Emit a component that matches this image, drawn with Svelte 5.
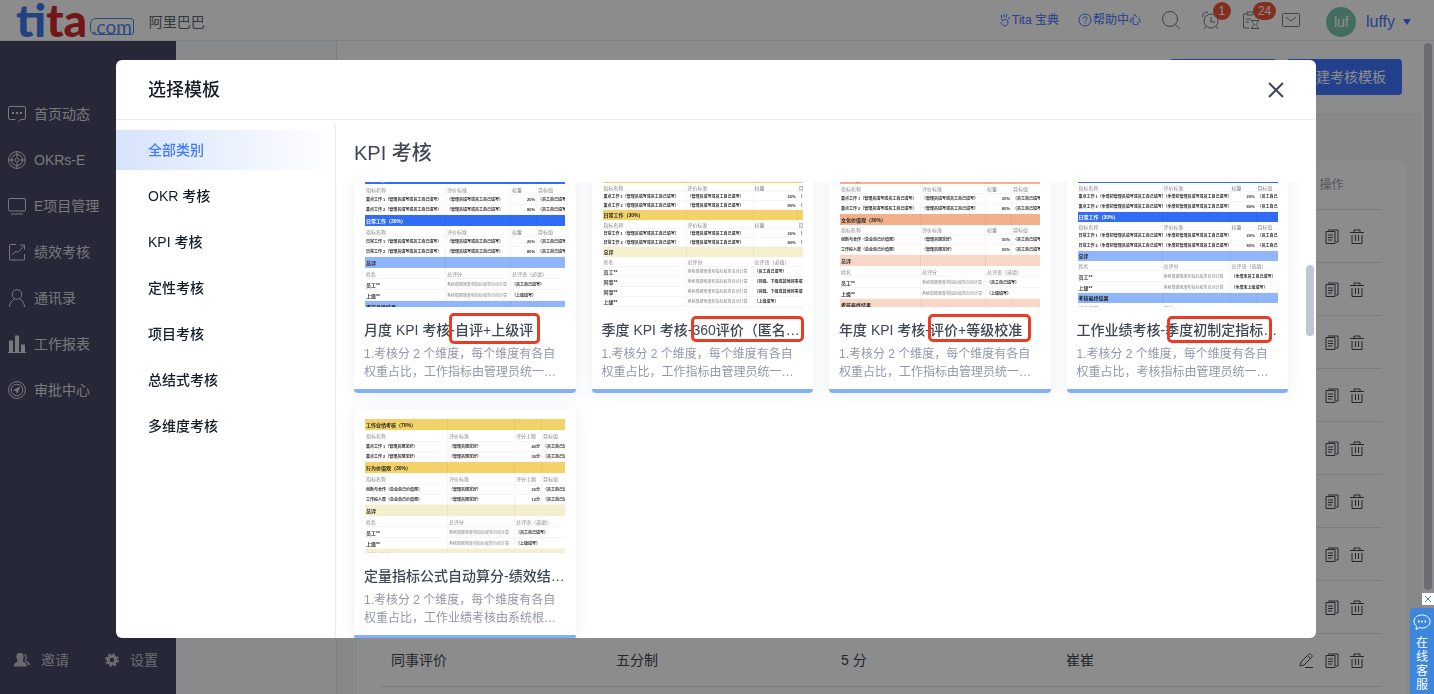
<script>
    let navItems = [
        { label: '首页动态', icon: 'chat' },
        { label: 'OKRs-E', icon: 'target' },
        { label: 'E项目管理', icon: 'screen' },
        { label: '绩效考核', icon: 'chart' },
        { label: '通讯录', icon: 'user' },
        { label: '工作报表', icon: 'bars' },
        { label: '审批中心', icon: 'stamp' }
    ];

    let categories = ['全部类别', 'OKR 考核', 'KPI 考核', '定性考核', '项目考核', '总结式考核', '多维度考核'];
    let active = $state('全部类别');

    const byBoth = '（管理员填写或员工自己填写）';
    const byQuarter = '（季度初管理员填写或员工自己填写）';
    const fixed = '（管理员规定好）';
    const own = '（员工自己填写）';

    function group(title, tone, rows, limit = '权重') {
        return { title, tone, head: ['指标名称', '评价标准', limit, '目标值'], rows };
    }

    function summary(tone, comment, rows) {
        return { title: '总评', tone, wide: true, head: ['姓名', '总评分', comment], rows: rows.map(([who, note]) => [who, '系统根据维度和指标权重自动计算', note]) };
    }

    // cols: widths of the preview columns, h: heights of title / head / body rows
    let templates = [
        {
            name: '月度 KPI 考核-自评+上级评',
            desc: '1.考核分 2 个维度，每个维度有各自权重占比，工作指标由管理员统一…',
            cols: [81, 65, 26, 68], h: [11, 11, 10], sh: [11, 11],
            mark: [95, 150, 91, 31],
            groups: [
                group('工作业绩（70%）', 'blue', [['重点工作 1' + byBoth, byBoth, '20%', own], ['重点工作 2' + byBoth, byBoth, '80%', own]]),
                group('日常工作（30%）', 'blue', [['日常工作 1' + byBoth, byBoth, '20%', own], ['日常工作 2' + byBoth, byBoth, '80%', own]]),
                summary('sky', '总评语（必填）', [['员工**', own], ['上级**', '（上级填写）']]),
                { title: '考核最终结果', tone: 'sky', head: [], rows: [] }
            ]
        },
        {
            name: '季度 KPI 考核-360评价（匿名…',
            desc: '1.考核分 2 个维度，每个维度有各自权重占比，工作指标由管理员统一…',
            cols: [84, 67, 44, 45], h: [10, 9, 9], sh: [10, 10],
            mark: [99, 153, 113, 26],
            groups: [
                group('工作业绩（70%）', 'gold', [['重点工作 1' + byBoth, byBoth, '20%', own], ['重点工作 2' + byBoth, byBoth, '80%', own]]),
                group('日常工作（30%）', 'gold', [['日常工作 1' + byBoth, byBoth, '20%', own], ['日常工作 2' + byBoth, byBoth, '80%', own]]),
                summary('cream', '总评语（必填）', [['员工**', own], ['同事**', '（同级、下级或其他同事填写）'], ['同事**', '（同级、下级或其他同事填写）'], ['上级**', '（上级填写）']])
            ]
        },
        {
            name: '年度 KPI 考核-评价+等级校准',
            desc: '1.考核分 2 个维度，每个维度有各自权重占比，工作指标由管理员统一…',
            cols: [81, 65, 26, 68], h: [11, 10, 10], sh: [11, 11],
            mark: [99, 151, 103, 28],
            groups: [
                group('工作业绩（70%）', 'orange', [['重点工作 1' + byBoth, byBoth, '20%', own], ['重点工作 2' + byBoth, byBoth, '80%', own]]),
                group('文化价值观（30%）', 'orange', [['创新与合作（企业自己价值观）', fixed, '50%', own], ['工作投入度（企业自己价值观）', fixed, '50%', own]]),
                summary('peach', '总评语（选填）', [['员工**', own], ['上级**', '（上级填写）']]),
                { title: '考核最终结果', tone: 'peach', head: [], rows: [] }
            ]
        },
        {
            name: '工作业绩考核-季度初制定指标…',
            desc: '1.考核分 2 个维度，每个维度有各自权重占比，考核指标由管理员统一…',
            cols: [85, 68, 26, 61], h: [10, 9, 10], sh: [10, 11],
            mark: [100, 153, 105, 27],
            groups: [
                group('工作业绩（70%）', 'blue', [['重点工作 1' + byQuarter, byQuarter, '20%', own], ['重点工作 2' + byQuarter, byQuarter, '80%', own]]),
                group('日常工作（30%）', 'blue', [['日常工作 1' + byQuarter, byQuarter, '20%', own], ['日常工作 2' + byQuarter, byQuarter, '80%', own]]),
                summary('sky', '总评语（选填）', [['员工**', '（季度末员工自己填写）'], ['上级**', '（季度末上级填写）']]),
                { title: '考核最终结果', tone: 'sky', head: ['绩效结果', '备注'], rows: [] }
            ]
        },
        {
            name: '定量指标公式自动算分-绩效结…',
            desc: '1.考核分 2 个维度，每个维度有各自权重占比，工作业绩考核由系统根…',
            cols: [83, 67, 27, 63], h: [11, 12, 10], sh: [11, 11],
            groups: [
                group('工作业绩考核（70%）', 'gold', [['重点工作 1' + fixed, fixed, '40分', own], ['重点工作 2' + fixed, fixed, '30分', own]], '评分上限'),
                group('行为价值观（30%）', 'gold', [['创新与合作（企业自己价值观）', fixed, '20分', own], ['工作投入度（企业自己价值观）', fixed, '10分', own]], '评分上限'),
                summary('cream', '总评语（选填）', [['员工**', own], ['上级**', '（上级填写）']]),
                { title: '考核最终结果', tone: 'cream', head: [], rows: [] }
            ]
        }
    ];

    let rows = [
        ...Array.from({ length: 8 }, () => ['', '', '', '']),
        ['同事评价', '五分制', '5 分', '崔崔'],
        ['', '', '', '']
    ];
</script>

<div class="page">
    <header class="topbar">
        <a class="logo" href="/" aria-label="tita.com"><span class="blue">ti</span><span class="red">ta</span><small>.com</small></a>
        <span class="company">阿里巴巴</span>

        <div class="tools">
            <a class="link" href="#guide">
                <svg width="12" height="14" viewBox="0 0 12 14"><path d="M2 7c0-1 2-1 2 1 1-3 5-2 5 1 0 2-1 4-3 4s-4-2-4-4M5 1v3M8 1L7 4M2 2l1 3M11 4L9 6" /></svg>
                <span>Tita 宝典</span>
            </a>
            <a class="link help" href="#help">
                <svg width="14" height="14" viewBox="0 0 14 14"><circle cx="7" cy="7" r="6" /><path d="M5 6c0-3 4-3 4-.5C9 7 7 7 7 8.500M7 9.600v1" /></svg>
                <span>帮助中心</span>
            </a>
            <button class="icon" aria-label="搜索">
                <svg width="18" height="18" viewBox="0 0 18 18"><circle cx="8" cy="8" r="7.500" /><path d="M13.500 13.500L18 18" /></svg>
            </button>
            <button class="icon" aria-label="提醒">
                <svg width="18" height="18" viewBox="0 0 18 18"><circle cx="9" cy="10" r="7" /><path d="M9 6v5h4M4 15.500L2 18M14 15.500l2 2.500M1 6C0 3 3 0 6 1.500M17 6c1-3-2-6-5-4.500" /></svg>
                <span class="badge">1</span>
            </button>
            <button class="icon" aria-label="待办">
                <svg width="18" height="18" viewBox="0 0 18 18"><path d="M7 17H1.500V3H5M12 3h2v4M5 1h6v3H5zM4 8h5M4 11h3M9 9.500h8M9 17.500h8M10 9.500c0 3 2 3 2 4s-2 1-2 4M16 9.500c0 3-2 3-2 4s2 1 2 4" /></svg>
                <span class="badge">24</span>
            </button>
            <button class="icon" aria-label="消息">
                <svg width="18" height="18" viewBox="0 0 18 18"><rect x=".5" y="2.500" width="17" height="13" rx="1" /><path d="M4 6l5 4 5-4" /></svg>
            </button>
            <span class="avatar">luf</span>
            <button class="account">luffy <svg width="8" height="6" viewBox="0 0 8 6"><path d="M0 0h8L4 6z" /></svg></button>
        </div>
    </header>

    <div class="body">
        <nav class="side">
            {#each navItems as item}
                <a href="#{item.icon}">
                    <svg width="18" height="18" viewBox="0 0 18 18">
                        {#if item.icon === 'chat'}
                            <path d="M7.500 14.500H2a1.500 1.500 0 0 1-1.500-1.500V3A1.500 1.500 0 0 1 2 1.500h14A1.500 1.500 0 0 1 17.500 3v10a1.500 1.500 0 0 1-1.500 1.500h-3L10 17" /><path class="dots" d="M4 8h2M8 8h2M12 8h2" />
                        {:else if item.icon === 'target'}
                            <circle cx="9" cy="9" r="8.400" /><circle cx="9" cy="9" r="5.500" /><circle cx="9" cy="9" r="2" /><path d="M9 0v6M9 12v6M0 9h6M12 9h6" />
                        {:else if item.icon === 'screen'}
                            <rect x=".5" y="1.500" width="17" height="12.500" rx="1.500" /><path d="M3 17h12" />
                        {:else if item.icon === 'chart'}
                            <path d="M8 1.500H2.500a1 1 0 0 0-1 1v13.500a1 1 0 0 0 1 1H15.500a1 1 0 0 0 1-1V11M4 12l4-4 2 1.500 6-7M12 2h4.500v4.500" />
                        {:else if item.icon === 'user'}
                            <circle cx="9" cy="5.500" r="4.800" /><path d="M1.500 18c0-4 2-6.500 5-8M16.500 18c0-4-2-6.500-5-8" />
                        {:else if item.icon === 'bars'}
                            <path class="solid" d="M0 17h18v1H0zM1 5.500h4V17H1zM7 .5h4V17H7zM13 9.500h4V17h-4z" />
                        {:else}
                            <circle cx="9" cy="9" r="8.400" /><circle cx="9" cy="9" r="5.800" /><path class="solid" d="M12.500 5.500L5 9l3 1 1 3z" />
                        {/if}
                    </svg>
                    {item.label}
                </a>
            {/each}
            <div class="side-foot">
                <a href="#invite">
                    <svg width="16" height="14" viewBox="0 0 16 14"><path class="solid" d="M6 0c3 0 4 2 3.500 4.500C9 7 8.500 8 9 8.500c1 .8 3.500 1 4 5H0c0-4 2-4 3.500-5C4 8 3 7 2.500 4.500 2 2 3 0 6 0zM10 1c3 0 3 2.500 2.500 4.500s-.5 2 0 2.500c1 .7 3 1 3.500 4h-2c-.5-2-2-3-3.500-4 1-2 1.500-5-.5-7z" /></svg>
                    邀请
                </a>
                <a href="#settings">
                    <svg width="14" height="14" viewBox="0 0 14 14"><circle class="gear" cx="7" cy="7" r="3.800" /><circle class="teeth" cx="7" cy="7" r="5.800" /></svg>
                    设置
                </a>
            </div>
        </nav>

        <aside class="subnav"></aside>

        <main>
            <div class="actions">
                <button class="primary">从模板新建</button>
                <button class="primary">新建考核模板</button>
            </div>
            <div class="content">
                <div class="sheet">
                    <table class="list">
                        <colgroup><col /><col /><col /><col /><col class="ops" /></colgroup>
                        <thead>
                            <tr><th></th><th></th><th></th><th></th><th>操作</th></tr>
                        </thead>
                        <tbody>
                            {#each rows as row}
                                <tr>
                                    {#each row as cell}<td>{cell}</td>{/each}
                                    <td class="row-ops">
                                        <button aria-label="编辑"><svg width="14" height="16" viewBox="0 0 14 16"><path d="M1 13l1-4 7.500-7.500a1.500 1.500 0 0 1 2.500 0l.5.5a1.500 1.500 0 0 1 0 2.500L5 12zM9 3l3 3M6 14.500h8" /></svg></button>
                                        <button aria-label="复制"><svg width="14" height="16" viewBox="0 0 14 16"><path d="M1 2.500h9v12H1zM3 1h10v12h-2M3 6h5M3 8.500h5M3 11h4" /></svg></button>
                                        <button aria-label="删除"><svg width="14" height="16" viewBox="0 0 14 16"><path d="M0 3.500h14M4 3V1h6v2M2 6v8.500h10V6M5.500 6v6M8.500 6v6" /></svg></button>
                                    </td>
                                </tr>
                            {/each}
                        </tbody>
                    </table>
                </div>
            </div>
        </main>
        <div class="track"><span></span></div>
    </div>
</div>

<div class="mask">
    <div class="dialog" role="dialog" aria-label="选择模板">
        <div class="dialog-head">
            <h2>选择模板</h2>
            <button aria-label="关闭"><svg width="16" height="16" viewBox="0 0 16 16"><path d="M1 1l14 14M15 1L1 15" /></svg></button>
        </div>
        <div class="dialog-body">
            <div class="cats">
                {#each categories as cat}
                    <button class:active={active === cat} onclick={() => (active = cat)}>{cat}</button>
                {/each}
            </div>
            <section>
                <h3>KPI 考核</h3>
                <div class="scroll">
                    <div class="grid">
                        {#each templates as t}
                            <article class="card">
                                <div class="thumb">
                                    <table>
                                        <colgroup>{#each t.cols as w}<col style="width: {w}px" />{/each}</colgroup>
                                        <tbody>
                                            {#each t.groups as g}
                                                <tr class="bar {g.tone}" style="height: {t.h[0]}px">
                                                    <td>{g.title}</td><td></td>
                                                    {#if g.wide}<td colspan="2"></td>{:else}<td></td><td></td>{/if}
                                                </tr>
                                                {#if g.head.length}
                                                    <tr class="head" style="height: {g.wide ? t.sh[0] : t.h[1]}px">
                                                        {#each g.head as text, i}<td colspan={g.wide && i === 2 ? 2 : 1}>{text}</td>{/each}
                                                    </tr>
                                                {/if}
                                                {#each g.rows as r}
                                                    <tr class:who={g.wide} style="height: {g.wide ? t.sh[1] : t.h[2]}px">
                                                        {#each r as text, i}<td colspan={g.wide && i === 2 ? 2 : 1}>{text}</td>{/each}
                                                    </tr>
                                                {/each}
                                            {/each}
                                        </tbody>
                                    </table>
                                </div>
                                <h4>{t.name}</h4>
                                <p>{t.desc}</p>
                                {#if t.mark}
                                    <i class="mark" style="left: {t.mark[0]}px; top: {t.mark[1]}px; width: {t.mark[2]}px; height: {t.mark[3]}px"></i>
                                {/if}
                            </article>
                        {/each}
                    </div>
                    <span class="thumb-bar"></span>
                </div>
            </section>
        </div>
    </div>
</div>

<div class="service">
    <button class="service-close" aria-label="关闭客服"><svg width="8" height="8" viewBox="0 0 8 8"><path d="M1 1l6 6M7 1L1 7" /></svg></button>
    <button class="service-open">
        <svg width="18" height="17" viewBox="0 0 18 17"><path d="M9 1c4.500 0 8 2.500 8 6.500S13.500 14 9 14c-1 0-2 0-3-.5L3 15.500l.5-3.500C2 11 1 9.500 1 7.500 1 3.500 4.500 1 9 1z" /><path class="dots" d="M5 7.500h1.500M8.300 7.500h1.500M11.600 7.500h1.500" /></svg>
        <span>在线客服</span>
    </button>
</div>

<style>
    :global(body) {
        margin: 0;
        overflow: hidden;
        font-family: "Liberation Sans", "Noto Sans CJK SC", sans-serif;
        font-size: 14px;
        line-height: 20px;
        color: #3f4755;
    }

    button {
        font: inherit;
        color: inherit;
        border: 0;
        padding: 0;
        background: none;
        cursor: pointer;
    }

    a {
        color: inherit;
        text-decoration: none;
    }

    svg {
        fill: none;
        stroke: currentColor;
        flex: none;
        display: block;
    }

    .solid {
        fill: currentColor;
        stroke: none;
    }

    .page {
        height: 100vh;
        display: flex;
        flex-direction: column;
        background: #fff;
    }

    /* top bar */
    .topbar {
        height: 40px;
        flex: none;
        display: flex;
        align-items: center;
        padding: 0 23px 0 16px;
        border-bottom: 1px solid #ececf0;
    }

    .logo {
        display: flex;
        align-items: flex-end;
        font-family: Lato, sans-serif;
        font-weight: 900;
        font-size: 46px;
        line-height: 40px;
    }

    .blue {
        color: #3d79e8;
    }

    .red {
        color: #d02a2a;
    }

    .logo small {
        border: 1px solid #4a86f0;
        border-radius: 6px 3px 3px 6px;
        color: #4a86f0;
        font-size: 19px;
        font-weight: 400;
        line-height: 15px;
        padding: 0 1px;
        margin: 0 0 5px 3px;
    }

    .company {
        margin-left: 15px;
        color: #5f6675;
        padding-top: 4px;
    }

    .tools {
        margin-left: auto;
        display: flex;
        align-items: center;
        color: #737a89;
    }

    .link {
        display: flex;
        align-items: center;
        gap: 1px;
        font-size: 12px;
        color: #3f76ff;
        margin-right: 19px;
    }

    .help {
        margin-right: 21px;
    }

    .icon {
        position: relative;
        margin-right: 22px;
    }

    .badge {
        position: absolute;
        left: 11px;
        top: -9px;
        min-width: 8px;
        padding: 0 5px;
        border-radius: 9px;
        background: #f0553f;
        color: #fff;
        font-size: 12px;
        line-height: 18px;
    }

    .avatar {
        width: 30px;
        height: 30px;
        margin: 3px 10px 0 4px;
        box-sizing: border-box;
        padding: 0 8px;
        border-radius: 50%;
        background: #7cc7b2;
        color: #fff;
        line-height: 30px;
        overflow: hidden;
    }

    .account {
        display: flex;
        align-items: center;
        gap: 8px;
        font-size: 16px;
        color: #3f76ff;
        padding-top: 4px;
    }

    .account svg {
        fill: currentColor;
        stroke: none;
    }

    .body {
        flex: 1;
        min-height: 0;
        display: flex;
    }

    /* left navigation */
    .side {
        width: 176px;
        box-sizing: border-box;
        padding-top: 50px;
        background: #464864;
        color: #dcdde2;
        display: flex;
        flex-direction: column;
    }

    .side a {
        height: 46px;
        padding-left: 8px;
        display: flex;
        align-items: center;
        gap: 8px;
    }

    .side-foot {
        margin-top: auto;
        padding: 0 0 11px 6px;
        display: flex;
        gap: 28px;
        color: #c2c4cc;
    }

    .side-foot a {
        gap: 11px;
    }

    .gear {
        stroke-width: 3;
    }

    .teeth {
        stroke-width: 2;
        stroke-dasharray: 2.400 2.150;
    }

    .subnav {
        width: 160px;
        background: #f7f9fc;
        border-right: 1px solid #e6e8ee;
    }

    main {
        flex: 1;
        display: flex;
        flex-direction: column;
    }

    .actions {
        display: flex;
        justify-content: flex-end;
        gap: 9px;
        padding: 18px 20px;
        border-bottom: 1px solid #eef0f4;
    }

    .primary {
        min-width: 108px;
        height: 36px;
        padding: 0 16px;
        border-radius: 4px;
        background: #3f76ff;
        color: #fff;
    }

    .content {
        flex: 1;
        min-height: 0;
        overflow: hidden;
        padding: 47px 16px 0 20px;
        background: #f5f7fa;
    }

    .sheet {
        background: #fff;
        border-radius: 8px;
        padding: 0 24px;
    }

    .list {
        width: 100%;
        table-layout: fixed;
        border-collapse: collapse;
    }

    .ops {
        width: 101px;
    }

    .list th {
        height: 48px;
        padding: 0;
        border-bottom: 1px solid #dfe2ea;
        font-size: 12px;
        font-weight: 400;
        color: #9aa0ae;
    }

    .list td {
        height: 52px;
        padding: 0 0 0 10px;
        border-bottom: 1px solid #dfe2ea;
    }

    .list .row-ops {
        padding: 0;
        text-align: center;
        color: #3f4755;
    }

    .row-ops button {
        vertical-align: middle;
        margin: 0 4px;
    }

    .track {
        width: 12px;
        padding: 2px 2px 0;
        box-sizing: border-box;
    }

    .track span {
        display: block;
        width: 8px;
        height: 84%;
        border-radius: 4px;
        background: #bfc5d4;
    }

    /* dialog */
    .mask {
        position: fixed;
        inset: 0;
        display: flex;
        padding: 60px 118px 56px 116px;
        background: rgba(0, 0, 0, 0.45);
    }

    .dialog {
        flex: 1;
        min-width: 0;
        display: flex;
        flex-direction: column;
        background: #fff;
        border-radius: 6px;
        overflow: hidden;
    }

    .dialog-head {
        height: 59px;
        flex: none;
        padding: 0 32px;
        display: flex;
        align-items: center;
        justify-content: space-between;
        border-bottom: 1px solid #e9ebef;
    }

    h2 {
        margin: 0;
        font-size: 18px;
        font-weight: 500;
        color: #141c28;
    }

    .dialog-head svg {
        stroke-width: 2;
    }

    .dialog-body {
        flex: 1;
        min-height: 0;
        display: flex;
    }

    .cats {
        width: 219px;
        flex: none;
        padding-top: 10px;
        display: flex;
        flex-direction: column;
        gap: 6px;
        border-right: 1px solid #e9ebef;
        border-top-right-radius: 6px;
    }

    .cats button {
        height: 40px;
        padding-left: 32px;
        text-align: left;
        font-weight: 500;
        color: #141c28;
    }

    .cats .active {
        color: #3f7bff;
        background: linear-gradient(90deg, #d6e3fc, #fff);
    }

    section {
        flex: 1;
        min-width: 0;
        display: flex;
        flex-direction: column;
    }

    h3 {
        margin: 0;
        padding: 18px 18px 14px;
        font-size: 20px;
        line-height: 30px;
        font-weight: 500;
    }

    .scroll {
        flex: 1;
        min-height: 0;
        position: relative;
        overflow: hidden;
        padding: 0 28px 0 18px;
    }

    .grid {
        display: grid;
        grid-template-columns: repeat(4, minmax(0, 1fr));
        gap: 16px;
        margin-top: -19px;
    }

    .thumb-bar {
        position: absolute;
        right: 2px;
        top: 83px;
        width: 8px;
        height: 71px;
        border-radius: 4px;
        background: #bfc7d8;
    }

    .card {
        position: relative;
        padding: 10px 10px 8px;
        background: #fff;
        border-bottom: 4px solid #84affa;
        border-radius: 4px;
        box-shadow: 0 2px 16px rgba(127, 145, 180, 0.14);
    }

    h4 {
        margin: 12px 0 4px;
        font-size: 14px;
        line-height: 22px;
        font-weight: 500;
        white-space: nowrap;
    }

    p {
        margin: 0;
        font-size: 12px;
        line-height: 18px;
        color: #9298a8;
    }

    .mark {
        position: absolute;
        box-sizing: border-box;
        border: 3px solid #ea3c24;
        border-radius: 5px;
    }

    /* miniature form preview */
    .thumb {
        width: 200px;
        height: 134px;
        overflow: hidden;
        margin: 0 1px;
    }

    .thumb table {
        width: 240px;
        table-layout: fixed;
        border-spacing: 0;
        font-size: 4px;
        font-weight: 700;
        line-height: 6px;
        color: #333;
    }

    .thumb td {
        padding: 0 0 0 1px;
        white-space: nowrap;
        overflow: hidden;
        box-shadow: inset -1px -1px #f6f6f6;
    }

    .thumb td:nth-child(3) {
        text-align: right;
        padding-right: 2px;
    }

    .thumb .head td,
    .thumb .who td {
        text-align: left;
    }

    .thumb .head {
        font-size: 5px;
        font-weight: 400;
        color: #888;
    }

    .thumb .who td:first-child {
        font-size: 5px;
    }

    .thumb .who td:nth-child(2) {
        font-weight: 400;
        color: #888;
    }

    .thumb .bar {
        font-size: 5px;
        color: #222;
    }

    .thumb .bar td {
        box-shadow: inset -1px 0 rgba(0, 0, 0, 0.05);
    }

    .thumb .blue {
        background: #306cf6;
        color: #fff;
    }

    .thumb .sky {
        background: #8fb5fa;
    }

    .thumb .gold {
        background: #f4d26a;
    }

    .thumb .cream {
        background: #f5efcf;
    }

    .thumb .orange {
        background: #f2b08c;
    }

    .thumb .peach {
        background: #f8d7c6;
    }

    /* online service */
    .service {
        position: fixed;
        right: 0;
        bottom: 0;
        display: flex;
        flex-direction: column;
        align-items: flex-end;
        gap: 3px;
    }

    .service-close {
        width: 12px;
        height: 12px;
        display: grid;
        place-items: center;
        background: #fff;
        color: #3c86dc;
    }

    .service-open {
        width: 24px;
        height: 86px;
        display: flex;
        flex-direction: column;
        align-items: center;
        gap: 5px;
        padding-top: 6px;
        background: #3c86dc;
        border-radius: 4px 0 0 0;
        color: #fff;
        font-size: 12px;
        line-height: 14px;
    }

    .service-open span {
        width: 12px;
    }

    .dots {
        stroke-width: 2;
    }
</style>
